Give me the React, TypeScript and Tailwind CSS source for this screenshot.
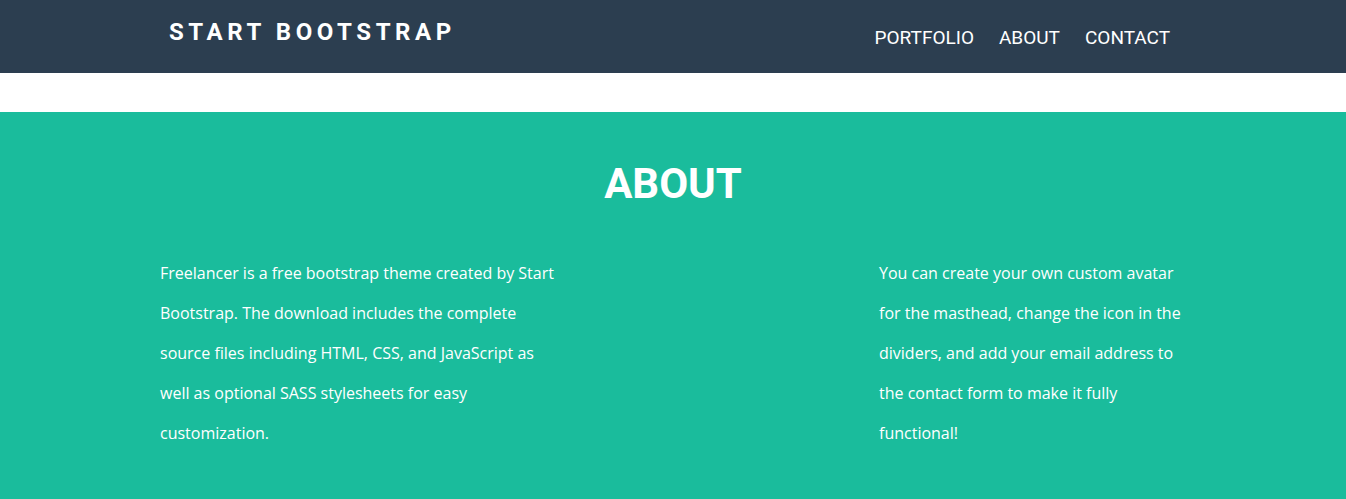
const navLinks = ["PORTFOLIO", "ABOUT", "CONTACT"];

const Header = () => {
    return (
        <nav className="h-[73px] w-full bg-[#2c3e50] flex items-center justify-between pl-[169px] pr-[176px] font-['Roboto',sans-serif]">
            <a className="text-white text-[24px] font-bold tracking-[0.19em] leading-none -mt-[10px]">START BOOTSTRAP</a>
            <ul className="flex gap-[25px] text-white text-[19px] leading-none mt-[2px]">
                {navLinks.map((link) => (
                    <li key={link}>{link}</li>
                ))}
            </ul>
        </nav>
    );
};

const App = () => {
    return (
        <div className="min-h-screen bg-white">
            <Header />
            <section className="mt-[39px] bg-[#1abc9c] text-white pt-[45px] pb-[46px] font-['Open_Sans',sans-serif]">
                <h2 className="text-center text-[42px] font-bold leading-[53px] font-['Roboto',sans-serif]">ABOUT</h2>
                <div className="flex justify-between mt-[43px] pl-[160px] pr-[157px]">
                    <p className="w-[402px] text-[16px] leading-[40px]">
                        Freelancer is a free bootstrap theme created by Start Bootstrap. The download includes the complete source files including HTML, CSS, and JavaScript as well as optional SASS stylesheets for easy customization.
                    </p>
                    <p className="w-[310px] text-[16px] leading-[40px]">
                        You can create your own custom avatar for the masthead, change the icon in the dividers, and add your email address to the contact form to make it fully functional!
                    </p>
                </div>
            </section>
        </div>
    );
};

export default App;
